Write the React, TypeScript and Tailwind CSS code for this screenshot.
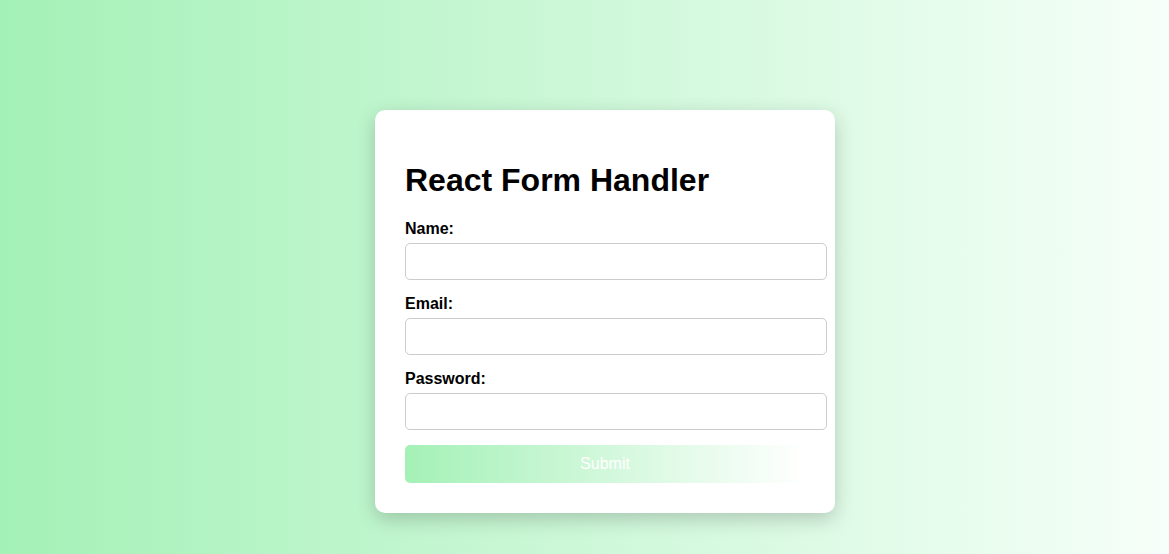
import React, { useState } from 'react';

const App: React.FC = () => {
  const [form, setForm] = useState({ name: '', email: '', password: '' });

  const update = (key: 'name' | 'email' | 'password') => (e: React.ChangeEvent<HTMLInputElement>) =>
    setForm({ ...form, [key]: e.target.value });

  const fields: { key: 'name' | 'email' | 'password'; label: string; type: string }[] = [
    { key: 'name', label: 'Name:', type: 'text' },
    { key: 'email', label: 'Email:', type: 'email' },
    { key: 'password', label: 'Password:', type: 'password' },
  ];

  return (
    <div className="min-h-[554px] bg-[linear-gradient(to_right,#a4f1b7,#f6fff9)] pt-[110px] pl-[375px] font-['Liberation_Sans',Arial,sans-serif] text-black">
      <div className="w-[460px] rounded-[10px] bg-white p-[30px] shadow-[0_6px_20px_rgba(0,0,0,0.2)]">
        <h1 className="mt-[22px] mb-[21px] text-[32px] leading-[37px] font-bold">React Form Handler</h1>
        <form onSubmit={(e) => e.preventDefault()}>
          {fields.map((f) => (
            <div key={f.key} className="mb-[15px]">
              <label className="mb-[5px] block text-[16px] leading-[18px] font-bold">{f.label}</label>
              <input
                type={f.type}
                value={form[f.key]}
                onChange={update(f.key)}
                className="block h-[37px] w-[422px] rounded-[5px] border border-[#cccccc] bg-white px-[10px] text-[16px] outline-none"
              />
            </div>
          ))}
          <button
            type="submit"
            className="mt-[2px] block h-[38px] w-[400px] rounded-[5px] bg-[linear-gradient(to_right,#a4f1b7,#ffffff)] text-[16px] text-white"
          >
            Submit
          </button>
        </form>
      </div>
    </div>
  );
};

export default App;
